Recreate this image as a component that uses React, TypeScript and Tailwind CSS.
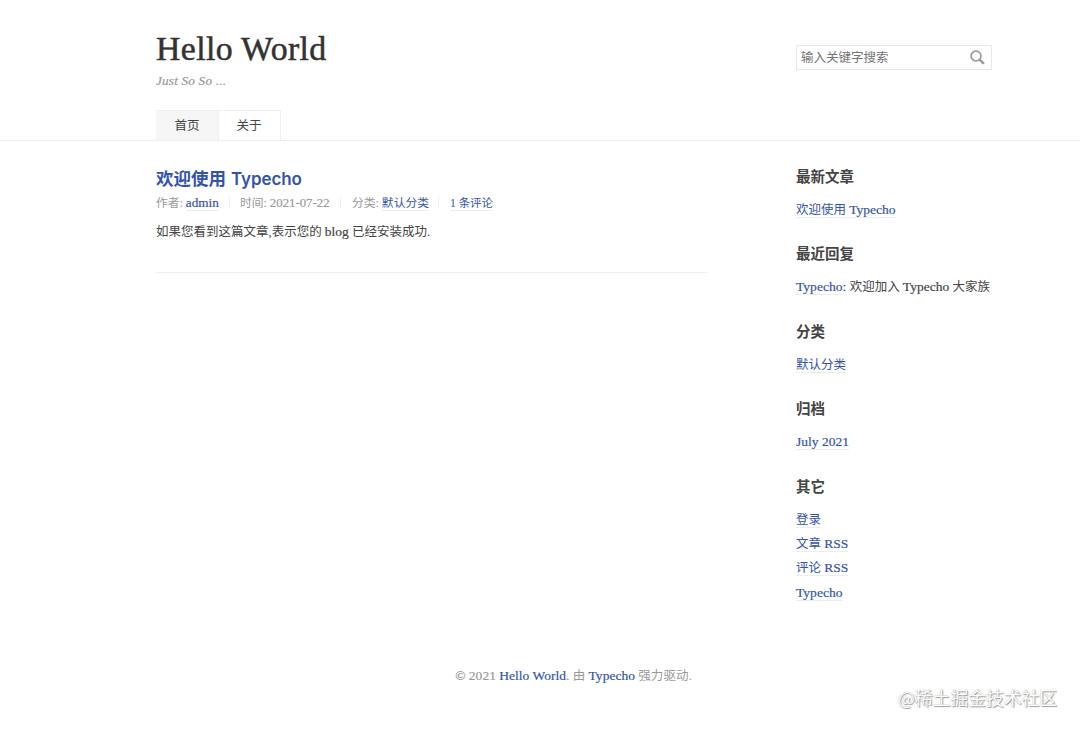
import React from 'react';

interface TextProps {
  children: React.ReactNode;
}

const En = ({ children }: TextProps) => (
  <span className="text-[13.5px] tracking-[0.03px] [-webkit-text-stroke:0.2px_currentColor]">{children}</span>
);

const TextLink = ({ children }: TextProps) => (
  <a href="#" className="inline-block leading-[14px] border-b border-[#ececec] text-[#3354aa]">
    {children}
  </a>
);

const Divider = () => <span className="w-px h-3 bg-[#efefef]" />;

const widgets: { title: string; items: React.ReactNode[] }[] = [
  { title: '最新文章', items: [<TextLink>欢迎使用 <En>Typecho</En></TextLink>] },
  {
    title: '最近回复',
    items: [
      <>
        <TextLink><En>Typecho</En></TextLink><En>: </En>欢迎加入 <En>Typecho</En> 大家族
      </>,
    ],
  },
  { title: '分类', items: [<TextLink>默认分类</TextLink>] },
  { title: '归档', items: [<TextLink><En>July 2021</En></TextLink>] },
  {
    title: '其它',
    items: [
      <TextLink>登录</TextLink>,
      <TextLink>文章 <En>RSS</En></TextLink>,
      <TextLink>评论 <En>RSS</En></TextLink>,
      <TextLink><En>Typecho</En></TextLink>,
    ],
  },
];

const SearchBox = () => (
  <form className="mt-[45px] w-[196px] h-[25px] flex items-center justify-between border border-[#e9e9e9] pl-1 pr-1.5">
    <span className="pt-px text-[12.5px] text-[#757575]">输入关键字搜索</span>
    <svg width="15" height="15" viewBox="0 0 15 15" fill="none" stroke="#999" className="shrink-0">
      <circle cx="6" cy="6" r="4.9" strokeWidth="1.7" />
      <path d="M9.8 9.8 L13.3 13.1" strokeWidth="2.4" strokeLinecap="round" />
    </svg>
  </form>
);

const Header = () => (
  <header className="h-[141px] border-b border-[#efefef]">
    <div className="ml-[156px] w-[836px] h-full flex justify-between">
      <div className="flex flex-col">
        <h1 className="mt-[29px] h-10 text-[33.8px] leading-10 tracking-[0.36px] text-[#333] whitespace-nowrap [-webkit-text-stroke:0.5px_currentColor]">
          Hello World
        </h1>
        <p className="mt-[3px] h-[18px] text-[13.2px] leading-[18px] tracking-[0.2px] italic text-[#999] [-webkit-text-stroke:0.2px_currentColor]">
          Just So So ...
        </p>
        <nav className="mt-5 flex h-[30px] w-[125px] border-t border-r border-[#f0f0f0] text-[12.5px] text-[#444] leading-[30px] text-center">
          <a href="#" className="w-[62px] bg-[#f6f6f6]">首页</a>
          <a href="#" className="flex-1 border-l border-[#f0f0f0] pr-px">关于</a>
        </nav>
      </div>
      <SearchBox />
    </div>
  </header>
);

const Post = () => (
  <article className="w-[551px] h-[132px] border-b border-[#efefef]">
    <h2 className="mt-[26px] h-6 flex items-baseline gap-[5px] text-[17.5px] leading-6 font-bold text-[#3354aa] font-['Liberation_Sans','Noto_Sans_CJK_SC',sans-serif]">
      <span>欢迎使用</span>
      <span className="font-['Inter',sans-serif] font-semibold text-[17px] tracking-[-0.1px]">Typecho</span>
    </h2>
    <div className="mt-1 h-4 flex items-center text-[11.8px] leading-4 text-[#999] whitespace-nowrap">
      <span className="w-[73px]">作者: <TextLink><span className="text-[13.2px] [-webkit-text-stroke:0.2px_currentColor]">admin</span></TextLink></span>
      <Divider />
      <span className="ml-[10px] w-[100px]">
        时间: <span className="text-[12.8px] [-webkit-text-stroke:0.2px_currentColor]">2021-07-22</span>
      </span>
      <Divider />
      <span className="ml-[11px] w-[86px]">分类: <TextLink>默认分类</TextLink></span>
      <Divider />
      <span className="ml-[11px] text-[11.5px]"><TextLink>1 条评论</TextLink></span>
    </div>
    <p className="mt-[9px] h-6 leading-6 text-[#444] whitespace-nowrap">
      如果您看到这篇文章,表示您的 <En>blog</En> 已经安装成功.
    </p>
  </article>
);

const Sidebar = () => (
  <aside className="w-[196px] pt-[25px] flex flex-col gap-[21.3px]">
    {widgets.map((widget) => (
      <section key={widget.title}>
        <h3 className="h-5 leading-5 text-[14.5px] font-bold text-[#444] font-['Noto_Sans_CJK_SC',sans-serif]">
          {widget.title}
        </h3>
        <ul className="mt-3 text-[#444] whitespace-nowrap">
          {widget.items.map((item, index) => (
            <li key={index} className="h-[24.2px] leading-[24.2px]">{item}</li>
          ))}
        </ul>
      </section>
    ))}
  </aside>
);

export default function App() {
  return (
    <div className="relative w-[1080px] h-[730px] overflow-hidden bg-white text-[12.5px] font-['Liberation_Serif','Noto_Sans_CJK_SC',serif]">
      <Header />
      <main className="ml-[156px] w-[836px] h-[523px] flex justify-between">
        <Post />
        <Sidebar />
      </main>
      <footer className="ml-[156px] w-[835px] h-6 leading-6 text-center tracking-[0.1px] text-[#999]">
        <En>© 2021</En> <a href="#" className="text-[#3354aa]"><En>Hello World</En></a>
        <En>.</En> 由 <a href="#" className="text-[#3354aa]"><En>Typecho</En></a> 强力驱动.
      </footer>
      <div className="absolute left-[898px] top-[683px] h-7 leading-7 text-[17.8px] whitespace-nowrap text-white [text-shadow:1px_1px_1px_#999,0_0_1px_#999] font-['Noto_Sans_CJK_SC',sans-serif]">
        @稀土掘金技术社区
      </div>
    </div>
  );
}
